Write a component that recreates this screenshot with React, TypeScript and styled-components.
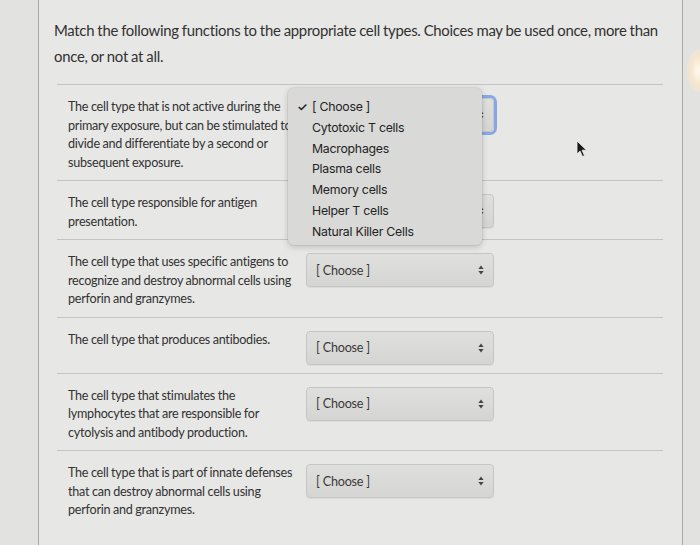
import React from "react";
import styled, { createGlobalStyle } from "styled-components";

const GlobalStyle = createGlobalStyle`
  html, body { margin: 0; padding: 0; }
  body {
    background: #e1e1df;
    font-family: Lato, "Open Sans", "Liberation Sans", sans-serif;
    color: #343434;
  }
`;

const Page = styled.div`
  position: relative;
  display: flex;
  width: 700px;
  height: 545px;
  overflow: hidden;
  padding: 0 17px 0 38px;
  box-sizing: border-box;
  background: #e2e2e0;
`;

const Card = styled.div`
  position: relative;
  flex: 1;
  display: flex;
  flex-direction: column;
  background: #e7e7e5;
  border-left: 1px solid #a9a9a7;
  border-right: 1px solid #a9a9a7;
`;

const Title = styled.p`
  margin: 0;
  padding: 17px 14px 15px 15px;
  font-size: 14.9px;
  letter-spacing: -0.28px;
  word-spacing: -0.4px;
  line-height: 26px;
  color: #313131;
`;

const Questions = styled.div`
  margin: 0 19px 0 18px;
  display: flex;
  flex-direction: column;
`;

const Question = styled.div`
  display: flex;
  align-items: flex-start;
  gap: 8px;
  padding: 13px 0 8px 11px;
  border-top: 1px solid #c3c3c1;
`;

const QuestionText = styled.div`
  width: 230px;
  flex: none;
  font-size: 12.6px;
  letter-spacing: -0.25px;
  word-spacing: -0.3px;
  line-height: 18.5px;
  color: #323232;
`;

const SelectBox = styled.div<{ $focused?: boolean }>`
  position: relative;
  flex: none;
  width: 188px;
  height: 34px;
  box-sizing: border-box;
  display: flex;
  align-items: center;
  justify-content: space-between;
  padding: 0 9px 0 9px;
  border: 1px solid #c6c6c4;
  border-radius: 4px;
  background: linear-gradient(#dfdfdd, #d5d5d3);
  box-shadow: ${(p) =>
    p.$focused ? "0 0 0 3px #86a8e2" : "0 1px 1px rgba(0,0,0,0.06)"};
  font-size: 12.6px;
  letter-spacing: -0.2px;
  color: #3a3a3a;
`;

const Arrows = styled.svg`
  width: 6px;
  height: 10px;
  flex: none;
`;

const Popup = styled.div`
  position: absolute;
  left: 249px;
  top: 88px;
  width: 194px;
  box-sizing: border-box;
  padding: 9px 0 2px 0;
  border-radius: 6px;
  background: #d9d9d7;
  box-shadow: 0 2px 6px rgba(0, 0, 0, 0.18), 0 0 0 1px rgba(0, 0, 0, 0.05);
  font-family: Inter, "Noto Sans", "Liberation Sans", sans-serif;
  font-size: 12.3px;
  letter-spacing: -0.25px;
  color: #232323;
  z-index: 2;
`;

const Option = styled.div`
  position: relative;
  height: 20.8px;
  line-height: 20.8px;
  padding-left: 24px;
  white-space: nowrap;
`;

const Check = styled.span`
  position: absolute;
  left: 9px;
  top: 0;
  font-size: 12px;
  font-weight: 600;
`;

const Cursor = styled.svg`
  position: absolute;
  left: 576px;
  top: 140px;
  width: 12px;
  height: 18px;
`;

const Glare = styled.div`
  position: absolute;
  left: 687px;
  top: 50px;
  width: 22px;
  height: 42px;
  border-radius: 50%;
  background: radial-gradient(
    ellipse at center,
    rgba(255, 250, 240, 1) 0%,
    rgba(252, 232, 200, 0.75) 45%,
    rgba(230, 225, 220, 0) 100%
  );
`;

const ArrowIcon = () => (
  <Arrows viewBox="0 0 6 10">
    <path d="M3 0.5 L5.6 4 L0.4 4 Z" fill="#444" />
    <path d="M3 9.5 L5.6 6 L0.4 6 Z" fill="#444" />
  </Arrows>
);

const Select = ({ focused }: { focused?: boolean }) => (
  <SelectBox $focused={focused}>
    <span>[ Choose ]</span>
    <ArrowIcon />
  </SelectBox>
);

const questions = [
  "The cell type that is not active during the primary exposure, but can be stimulated to divide and differentiate by a second or subsequent exposure.",
  "The cell type responsible for antigen presentation.",
  "The cell type that uses specific antigens to recognize and destroy abnormal cells using perforin and granzymes.",
  "The cell type that produces antibodies.",
  "The cell type that stimulates the lymphocytes that are responsible for cytolysis and antibody production.",
  "The cell type that is part of innate defenses that can destroy abnormal cells using perforin and granzymes.",
];

const options = [
  "[ Choose ]",
  "Cytotoxic T cells",
  "Macrophages",
  "Plasma cells",
  "Memory cells",
  "Helper T cells",
  "Natural Killer Cells",
];

export default function App() {
  return (
    <>
      <GlobalStyle />
      <Page>
        <Card>
          <Title>
            Match the following functions to the appropriate cell types. Choices may be used once, more than once, or not at all.
          </Title>
          <Questions>
            {questions.map((q, i) => (
              <Question key={i}>
                <QuestionText>{q}</QuestionText>
                <Select focused={i === 0} />
              </Question>
            ))}
          </Questions>
          <Popup>
            {options.map((o, i) => (
              <Option key={o}>
                {i === 0 && <Check>✓</Check>}
                {o}
              </Option>
            ))}
          </Popup>
        </Card>
        <Glare />
        <Cursor viewBox="0 0 12 18">
          <path
            d="M1 1 L1 14 L4 11 L6.5 16.5 L8.5 15.6 L6 10.2 L10.5 10.2 Z"
            fill="#1a1a1a"
            stroke="#f0f0f0"
            strokeWidth="0.8"
          />
        </Cursor>
      </Page>
    </>
  );
}
